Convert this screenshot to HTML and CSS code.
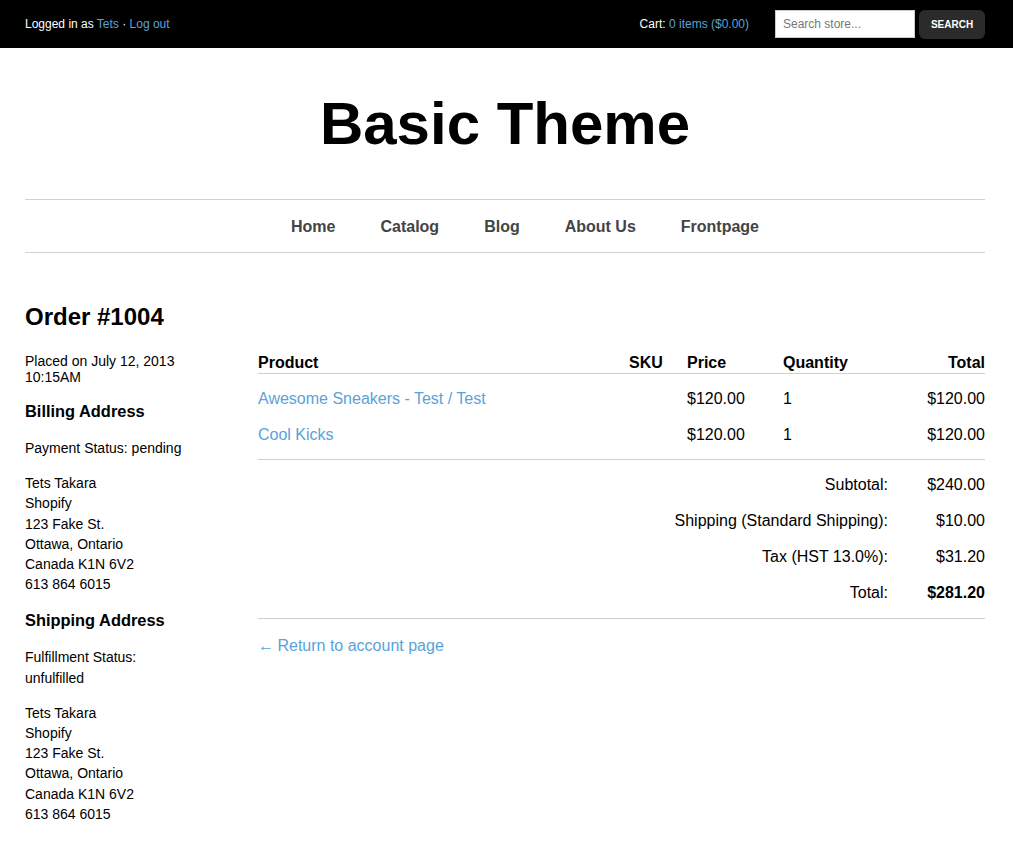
FILE: index.html
```html
<!DOCTYPE html>
<html lang="en">
<head>
<meta charset="utf-8">
<title>Order #1004 - Basic Theme</title>
<link rel="stylesheet" href="styles.css">
</head>
<body>
<div class="topbar">
  <div class="container topbar-inner">
    <div class="login">Logged in as <a href="#">Tets</a> · <a href="#">Log out</a></div>
    <div class="topbar-right">
      <div class="cart">Cart: <a href="#">0 items ($0.00)</a></div>
      <form class="search">
        <input class="search-input" type="text" placeholder="Search store...">
        <button class="search-btn" type="button">SEARCH</button>
      </form>
    </div>
  </div>
</div>

<div class="container">
  <header class="site-header">
    <h1 class="site-title">Basic Theme</h1>
  </header>
  <nav class="main-nav">
    <ul class="nav-list">
      <li><a href="#">Home</a></li>
      <li><a href="#">Catalog</a></li>
      <li><a href="#">Blog</a></li>
      <li><a href="#">About Us</a></li>
      <li><a href="#">Frontpage</a></li>
    </ul>
  </nav>

  <main class="order">
    <h2 class="order-title">Order #1004</h2>
    <div class="order-grid">
      <aside class="order-side">
        <p class="placed">Placed on July 12, 2013<br>10:15AM</p>
        <h3 class="side-heading">Billing Address</h3>
        <p>Payment Status: pending</p>
        <p>Tets Takara<br>Shopify<br>123 Fake St.<br>Ottawa, Ontario<br>Canada K1N 6V2<br>613 864 6015</p>
        <h3 class="side-heading">Shipping Address</h3>
        <p>Fulfillment Status:<br>unfulfilled</p>
        <p>Tets Takara<br>Shopify<br>123 Fake St.<br>Ottawa, Ontario<br>Canada K1N 6V2<br>613 864 6015</p>
      </aside>
      <section class="order-main">
        <table class="order-table">
          <colgroup>
            <col class="c-product">
            <col class="c-sku">
            <col class="c-price">
            <col class="c-qty">
            <col class="c-total">
          </colgroup>
          <thead>
            <tr>
              <th>Product</th>
              <th>SKU</th>
              <th>Price</th>
              <th>Quantity</th>
              <th class="right">Total</th>
            </tr>
          </thead>
          <tbody class="items">
            <tr>
              <td><a href="#">Awesome Sneakers - Test / Test</a></td>
              <td></td>
              <td>$120.00</td>
              <td>1</td>
              <td class="right">$120.00</td>
            </tr>
            <tr>
              <td><a href="#">Cool Kicks</a></td>
              <td></td>
              <td>$120.00</td>
              <td>1</td>
              <td class="right">$120.00</td>
            </tr>
          </tbody>
          <tbody class="totals">
            <tr>
              <td colspan="4" class="right">Subtotal:</td>
              <td class="right">$240.00</td>
            </tr>
            <tr>
              <td colspan="4" class="right">Shipping (Standard Shipping):</td>
              <td class="right">$10.00</td>
            </tr>
            <tr>
              <td colspan="4" class="right">Tax (HST 13.0%):</td>
              <td class="right">$31.20</td>
            </tr>
            <tr>
              <td colspan="4" class="right">Total:</td>
              <td class="right"><strong>$281.20</strong></td>
            </tr>
          </tbody>
        </table>
        <p class="return"><a href="#"><span class="arrow">←</span> Return to account page</a></p>
      </section>
    </div>
  </main>
</div>
</body>
</html>
```

FILE: styles.css
```css
* {
  box-sizing: border-box;
}

body {
  margin: 0;
  background: #fff;
  color: #000;
  font-family: "Liberation Sans", Arial, Helvetica, sans-serif;
  font-size: 14px;
  line-height: 20px;
}

a {
  color: #5aa2d9;
  text-decoration: none;
}

.container {
  width: 960px;
  margin: 0 25px;
}

/* Top bar */
.topbar {
  background: #000;
  color: #fff;
  font-size: 12px;
  line-height: 16px;
}

.topbar-inner {
  display: flex;
  align-items: center;
  justify-content: space-between;
  height: 48px;
}

.topbar-right {
  display: flex;
  align-items: center;
}

.cart {
  margin-right: 26px;
}

.search {
  display: flex;
  align-items: flex-start;
  gap: 4px;
  margin: 0;
}

.search-input {
  width: 140px;
  height: 28px;
  margin: 0;
  padding: 0 7px;
  border: 1px solid #ccc;
  border-radius: 0;
  background: #fff;
  font-family: inherit;
  font-size: 12px;
  color: #333;
}

.search-input::placeholder {
  color: #777;
}

.search-btn {
  width: 66px;
  height: 29px;
  margin: 0;
  padding: 0;
  border: 0;
  border-radius: 6px;
  background: #2b2b2b;
  color: #fff;
  font-family: inherit;
  font-size: 10px;
  font-weight: bold;
}

/* Header */
.site-header {
  padding-top: 41px;
  padding-bottom: 40px;
  text-align: center;
}

.site-title {
  margin: 0;
  font-size: 60px;
  line-height: 70px;
  font-weight: bold;
}

.main-nav {
  border-top: 1px solid #d0d0d0;
  border-bottom: 1px solid #d0d0d0;
}

.nav-list {
  display: flex;
  justify-content: center;
  align-items: center;
  gap: 45px;
  height: 52px;
  margin: 0;
  padding: 2px 0 0 40px;
  list-style: none;
}

.nav-list a {
  color: #444;
  font-size: 16px;
  font-weight: bold;
  line-height: 20px;
}

/* Order */
.order-title {
  margin: 49px 0 20px;
  font-size: 24px;
  line-height: 30px;
  font-weight: bold;
}

.order-grid {
  display: grid;
  grid-template-columns: 213px 1fr;
  column-gap: 20px;
  align-items: start;
}

.order-side {
  line-height: 20.2px;
}

.order-side p {
  margin: 0 0 15px;
}

.order-side .placed {
  line-height: 16px;
  margin-bottom: 0;
  padding-top: 1px;
}

.side-heading {
  margin: 16px 0 17px;
  font-size: 16.4px;
  line-height: 20px;
  font-weight: bold;
}

.order-table {
  width: 100%;
  table-layout: fixed;
  border-collapse: collapse;
  font-size: 16px;
  line-height: 20px;
}

.c-product { width: 371px; }
.c-sku { width: 58px; }
.c-price { width: 96px; }
.c-qty { width: 105px; }
.c-total { width: 97px; }

.order-table th,
.order-table td {
  padding: 0;
  text-align: left;
  vertical-align: middle;
}

.order-table th {
  padding-top: 1px;
  font-weight: bold;
  border-bottom: 1px solid #d0d0d0;
}

.order-table .right {
  text-align: right;
}

.items td {
  padding: 8px 0;
}

.items tr:first-child td {
  padding-top: 15px;
  padding-bottom: 7px;
}

.items tr:last-child td {
  padding-top: 9px;
  padding-bottom: 14px;
  border-bottom: 1px solid #d0d0d0;
}

.totals td {
  padding: 8px 0;
}

.totals tr:first-child td {
  padding-top: 15px;
  padding-bottom: 7px;
}

.totals tr:nth-child(2) td {
  padding-top: 9px;
}

.totals tr:last-child td {
  padding-bottom: 15px;
  border-bottom: 1px solid #d0d0d0;
}

.return {
  margin: 17px 0 0;
  font-size: 16px;
  line-height: 20px;
}

.arrow {
  margin-right: -1px;
}
```
